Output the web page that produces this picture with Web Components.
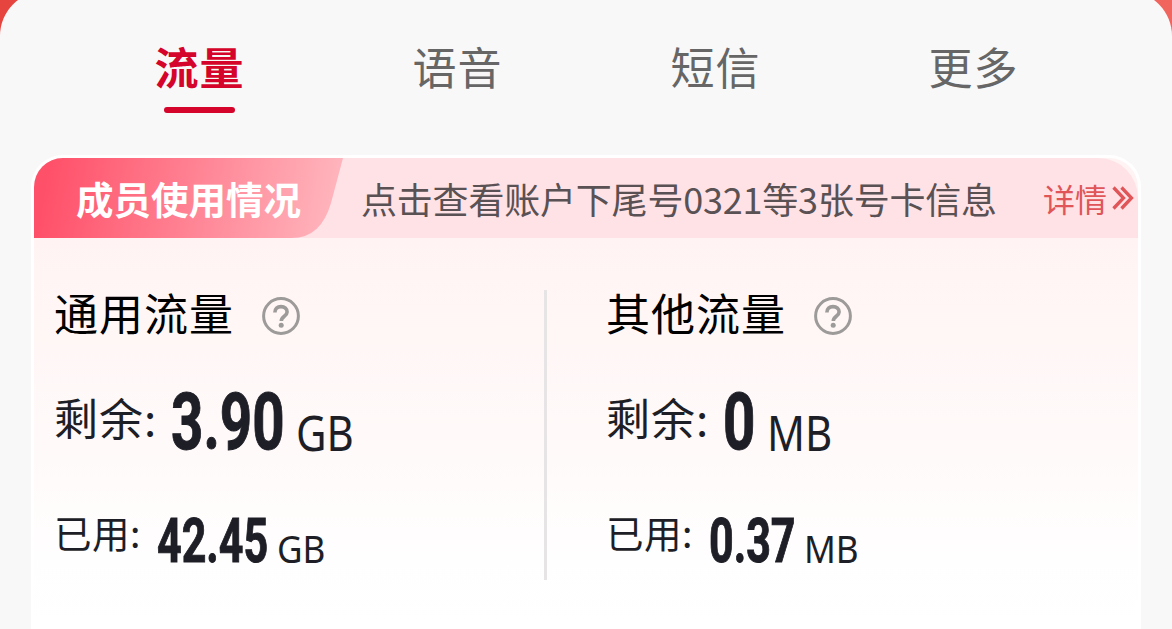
<!DOCTYPE html>
<html lang="zh-CN">
<head>
<meta charset="utf-8">
<meta name="viewport" content="width=device-width, initial-scale=1">
<title>流量</title>
<style>
    html {
        height: 100%;
        overflow: hidden;
    }

    body {
        margin: 0;
        height: 100%;
        overflow: hidden;
        background: linear-gradient(90deg, #e6443e, #f0655e);
        font-family: "Noto Sans CJK SC", "Noto Sans", sans-serif;
    }
</style>
</head>
<body>
<usage-sheet>
    <usage-tabs slot="tabs">
        <usage-tab active>流量</usage-tab>
        <usage-tab>语音</usage-tab>
        <usage-tab>短信</usage-tab>
        <usage-tab>更多</usage-tab>
    </usage-tabs>
    <usage-card>
        <member-banner slot="banner">
            <span slot="badge">成员使用情况</span>
            点击查看账户下尾号0321等3张号卡信息
            <span slot="link">详情</span>
        </member-banner>
        <usage-column>
            通用流量
            <usage-amount slot="left" label="剩余:" value="3.90" value-width="114" unit="GB"></usage-amount>
            <usage-amount slot="used" small label="已用:" value="42.45" value-width="111" unit="GB"></usage-amount>
        </usage-column>
        <usage-column>
            其他流量
            <usage-amount slot="left" label="剩余:" value="0" value-width="33" unit="MB"></usage-amount>
            <usage-amount slot="used" small label="已用:" value="0.37" value-width="86" unit="MB"></usage-amount>
        </usage-column>
    </usage-card>
</usage-sheet>

<script>
class BaseElement extends HTMLElement {
    constructor() {
        super();
        this.attachShadow({ mode: "open" }).innerHTML = this.render();
    }
}

class UsageSheet extends BaseElement {
    render() {
        return /* html */ `
            <style>
                :host {
                    display: flex;
                    flex-direction: column;
                    box-sizing: border-box;
                    height: calc(100% + 9px);
                    margin-top: -9px;
                    padding: 9px 31px 0;
                    border-radius: 45px 45px 0 0;
                    background: #f8f8f8;
                }
            </style>
            <slot name="tabs"></slot>
            <slot></slot>
        `;
    }
}

class UsageTabs extends BaseElement {
    render() {
        return /* html */ `
            <style>
                :host {
                    display: grid;
                    grid-template-columns: repeat(4, 1fr);
                    box-sizing: border-box;
                    height: 155px;
                    padding: 36px 39px 0;
                }
            </style>
            <slot></slot>
        `;
    }
}

class UsageTab extends BaseElement {
    render() {
        return /* html */ `
            <style>
                :host {
                    display: flex;
                    flex-direction: column;
                    align-items: center;
                    gap: 11px;
                    color: #666;
                    font-size: 44px;
                    line-height: 60px;
                    letter-spacing: 1px;
                }

                :host([active]) {
                    color: #d4042b;
                    font-weight: 700;
                }

                span {
                    padding-left: 1px;
                }

                .bar {
                    width: 71px;
                    height: 6px;
                    border-radius: 3px;
                }

                :host([active]) .bar {
                    background: #d4042b;
                }
            </style>
            <span><slot></slot></span>
            <div class="bar"></div>
        `;
    }
}

class UsageCard extends BaseElement {
    render() {
        return /* html */ `
            <style>
                :host {
                    display: flex;
                    flex-direction: column;
                    flex: 1;
                    box-sizing: border-box;
                    border: 3px solid #fff;
                    border-bottom: 0;
                    border-radius: 32px 32px 0 0;
                    background: linear-gradient(180deg, #fff3f3 0, #fff4f3 80px, #fffafa 300px, #fffefe 400px, #fff 470px);
                    overflow: hidden;
                }

                .columns {
                    display: grid;
                    grid-template-columns: 510px 1fr;
                    padding-top: 52px;
                }

                ::slotted(usage-column) {
                    padding-left: 20px;
                }

                ::slotted(usage-column:last-of-type) {
                    border-left: 3px solid #e6e4e5;
                    padding-left: 59px;
                }
            </style>
            <slot name="banner"></slot>
            <div class="columns"><slot></slot></div>
        `;
    }
}

class MemberBanner extends BaseElement {
    render() {
        return /* html */ `
            <style>
                :host {
                    display: flex;
                    align-items: center;
                    height: 80px;
                    border-radius: 0 40px 0 0;
                    background: #ffe2e6;
                    color: #595153;
                    font-size: 36px;
                    white-space: nowrap;
                }

                .badge {
                    box-sizing: border-box;
                    width: 310px;
                    height: 80px;
                    padding-left: 42px;
                    background: linear-gradient(100deg, #ff5069 5%, #ffb5bd 96%);
                    clip-path: path("M0 0H309L297 45Q287 80 258 80H0Z");
                    color: #fff;
                    font-size: 37.5px;
                    font-weight: 700;
                    line-height: 79px;
                }

                .text {
                    flex: 1;
                    padding-left: 17px;
                    letter-spacing: -0.2px;
                    line-height: 80px;
                }

                .link {
                    display: flex;
                    align-items: center;
                    gap: 5px;
                    padding-right: 4px;
                    color: #df5558;
                    font-size: 32px;
                    line-height: 80px;
                }
            </style>
            <div class="badge"><slot name="badge"></slot></div>
            <div class="text"><slot></slot></div>
            <div class="link">
                <slot name="link"></slot>
                <svg width="22" height="24" viewBox="0 0 22 24" fill="none" stroke="currentColor" stroke-width="3.3">
                    <path d="M1.5 1.5 11.5 12 1.5 22.5M9.5 1.5 19.5 12 9.5 22.5" />
                </svg>
            </div>
        `;
    }
}

class UsageColumn extends BaseElement {
    render() {
        return /* html */ `
            <style>
                :host {
                    display: block;
                    height: 290px;
                    box-sizing: border-box;
                }

                .title {
                    display: flex;
                    align-items: center;
                    height: 52px;
                    gap: 28px;
                    color: #000;
                    font-size: 44px;
                    letter-spacing: 1px;
                    line-height: 46px;
                }

                .title span {
                    margin-top: -8px;
                }

                .left {
                    padding-top: 45px;
                }

                .used {
                    padding-top: 35px;
                }
            </style>
            <div class="title">
                <span><slot></slot></span>
                <svg width="38" height="38" viewBox="0 0 38 38" fill="none" stroke="#9d9a9a">
                    <circle cx="19" cy="19" r="17.4" stroke-width="3" />
                    <path d="M12.9 15.5C12.9 11.7 15.3 9.6 19 9.6s6.1 2.3 6.1 5.4c0 4.3-5.8 4.3-5.8 9" stroke-width="3.6" />
                    <circle cx="19.2" cy="28.2" r="2.5" fill="#9d9a9a" stroke="none" />
                </svg>
            </div>
            <div class="left"><slot name="left"></slot></div>
            <div class="used"><slot name="used"></slot></div>
        `;
    }
}

class UsageAmount extends BaseElement {
    render() {
        const get = (name) => this.getAttribute(name);
        return /* html */ `
            <style>
                :host {
                    display: flex;
                    height: 80px;
                    color: #1d1e26;
                    font-size: 44px;
                    letter-spacing: 1px;
                    line-height: 60px;
                    white-space: nowrap;
                }

                :host([small]) {
                    font-size: 37.5px;
                    letter-spacing: 0.5px;
                }

                .label {
                    width: 117px;
                }

                :host([small]) .label {
                    width: 103px;
                }

                .figure {
                    display: flex;
                    align-items: baseline;
                    gap: 11px;
                    height: 80px;
                    margin-top: 7px;
                    letter-spacing: 0;
                    line-height: 1;
                }

                /* digits are squeezed to get a narrow, heavy face */
                .value {
                    width: ${get("value-width")}px;
                    font: 700 79px/56px Roboto, sans-serif;
                    transform: scaleX(0.715);
                    transform-origin: 0 0;
                    -webkit-text-stroke: 1px currentColor;
                }

                .unit {
                    position: relative;
                    top: 2px;
                    font: 400 49px/56px "Noto Sans", sans-serif;
                    transform: scaleX(0.855);
                    transform-origin: 0 0;
                }

                :host([small]) .figure {
                    gap: 9px;
                    margin-top: 17px;
                }

                :host([small]) .value {
                    font-size: 61px;
                    line-height: 44px;
                    transform: scaleX(0.705);
                }

                :host([small]) .unit {
                    top: 1px;
                    font-size: 39px;
                    line-height: 44px;
                    transform: scaleX(0.9);
                }
            </style>
            <span class="label">${get("label")}</span>
            <div class="figure">
                <span class="value">${get("value")}</span>
                <span class="unit">${get("unit")}</span>
            </div>
        `;
    }
}

customElements.define("usage-sheet", UsageSheet);
customElements.define("usage-tabs", UsageTabs);
customElements.define("usage-tab", UsageTab);
customElements.define("usage-card", UsageCard);
customElements.define("member-banner", MemberBanner);
customElements.define("usage-column", UsageColumn);
customElements.define("usage-amount", UsageAmount);
</script>
</body>
</html>
